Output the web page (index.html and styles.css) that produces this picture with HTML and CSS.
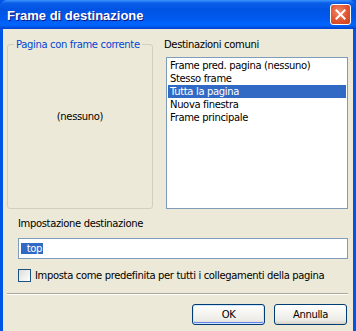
FILE: index.html
```html
<!DOCTYPE html>
<html lang="it">
<head>
    <meta charset="UTF-8">
    <title>Frame di destinazione</title>
    <link rel="stylesheet" href="styles.css">
</head>
<body>
    <div class="window">
        <div class="titlebar">
            <span class="title">Frame di destinazione</span>
            <button class="close" aria-label="Chiudi">
                <svg width="11" height="11" viewBox="0 0 11 11">
                    <path d="M1.5 1.5 L9.5 9.5 M9.5 1.5 L1.5 9.5" stroke="#fff" stroke-width="2" stroke-linecap="square"/>
                </svg>
            </button>
        </div>
        <div class="content">
            <div class="top-row">
                <fieldset class="group">
                    <legend>Pagina con frame corrente</legend>
                    <div class="frame-name">(nessuno)</div>
                </fieldset>
                <div class="common">
                    <div class="label">Destinazioni comuni</div>
                    <ul class="listbox">
                        <li>Frame pred. pagina (nessuno)</li>
                        <li>Stesso frame</li>
                        <li class="selected">Tutta la pagina</li>
                        <li>Nuova finestra</li>
                        <li>Frame principale</li>
                    </ul>
                </div>
            </div>

            <div class="label setting-label">Impostazione destinazione</div>
            <div class="textbox"><span class="sel">_top</span></div>

            <label class="check-row">
                <span class="checkbox"></span>
                Imposta come predefinita per tutti i collegamenti della pagina
            </label>

            <div class="separator"></div>

            <div class="buttons">
                <button class="btn default">OK</button>
                <button class="btn">Annulla</button>
            </div>
        </div>
    </div>
</body>
</html>
```

FILE: styles.css
```css
body {
    margin: 0;
    background-color: #ece9d8;
    font-family: "DejaVu Sans", Tahoma, sans-serif;
    font-size: 10px;
    letter-spacing: -0.35px;
    color: #000000;
}

.window {
    width: 356px;
    height: 331px;
    box-sizing: border-box;
    display: flex;
    flex-direction: column;
    background-color: #0055e5;
    overflow: hidden;
}

.titlebar {
    height: 29px;
    flex-shrink: 0;
    display: flex;
    align-items: center;
    justify-content: space-between;
    padding: 0 5px 0 7px;
    background: linear-gradient(#3d95ff 0, #0a5fe8 3px, #0054e3 9px, #0058ee 18px, #0066ff 25px, #0041cf 29px);
    border-radius: 7px 7px 0 0;
}

.title {
    color: #ffffff;
    font-family: "Liberation Sans", Arial, sans-serif;
    font-weight: bold;
    font-size: 13px;
    letter-spacing: 0;
    text-shadow: 1px 1px 0 #0a1883;
    padding-top: 1px;
}

.close {
    width: 21px;
    height: 21px;
    padding: 0;
    border: 1px solid #ffffff;
    border-radius: 3px;
    background: radial-gradient(circle at 40% 35%, #ef8a6a 0, #e0532f 55%, #c7401f 100%);
    display: flex;
    align-items: center;
    justify-content: center;
}

.content {
    flex: 1;
    margin: 0 3px;
    background-color: #ece9d8;
    padding: 9px 5px 0 4px;
}

.top-row {
    display: flex;
    height: 171px;
}

.group {
    width: 146px;
    box-sizing: border-box;
    margin: 0;
    padding: 0;
    border: 1px solid #d0d0bf;
    border-radius: 3px;
    display: flex;
    align-items: center;
    justify-content: center;
}

.group legend {
    color: #0046d5;
    padding: 0 2px;
    margin-left: 6px;
    line-height: 13px;
}

.frame-name {
    margin-bottom: 26px;
}

.common {
    flex: 1;
    margin-left: 11px;
    display: flex;
    flex-direction: column;
}

.label {
    line-height: 13px;
}

.listbox {
    list-style: none;
    margin: 6px 0 0 2px;
    padding: 1px;
    flex: 1;
    background-color: #ffffff;
    border: 1px solid #7f9db9;
}

.listbox li {
    height: 13px;
    line-height: 13px;
    padding-left: 2px;
}

.listbox li.selected {
    background-color: #316ac5;
    color: #ffffff;
}

.setting-label {
    margin: 8px 0 0 11px;
}

.textbox {
    margin: 8px 0 0 11px;
    height: 21px;
    box-sizing: border-box;
    border: 1px solid #7f9db9;
    background-color: #ffffff;
    padding: 3px 0 0 2px;
    line-height: 14px;
}

.sel {
    background-color: #316ac5;
    color: #ffffff;
    padding: 0 1px;
}

.check-row {
    display: flex;
    align-items: center;
    margin: 10px 0 0 11px;
    height: 13px;
}

.checkbox {
    width: 13px;
    height: 13px;
    box-sizing: border-box;
    border: 1px solid #1c5180;
    background: linear-gradient(135deg, #dcdcd7, #ffffff);
    margin-right: 4px;
}

.separator {
    margin-top: 11px;
    border-top: 1px solid #aca899;
    border-bottom: 1px solid #ffffff;
    height: 0;
}

.buttons {
    display: flex;
    justify-content: flex-end;
    gap: 9px;
    margin-top: 9px;
    padding-right: 1px;
}

.btn {
    width: 73px;
    height: 21px;
    font-family: inherit;
    font-size: 10px;
    letter-spacing: inherit;
    border: 1px solid #003c74;
    border-radius: 3px;
    background: linear-gradient(#ffffff, #ecebe6 80%, #d6d0c5);
    padding: 0;
}

.btn.default {
    box-shadow: inset 0 0 0 1px #cee7ff, inset 0 -1px 0 1px #6982ee;
}
```
